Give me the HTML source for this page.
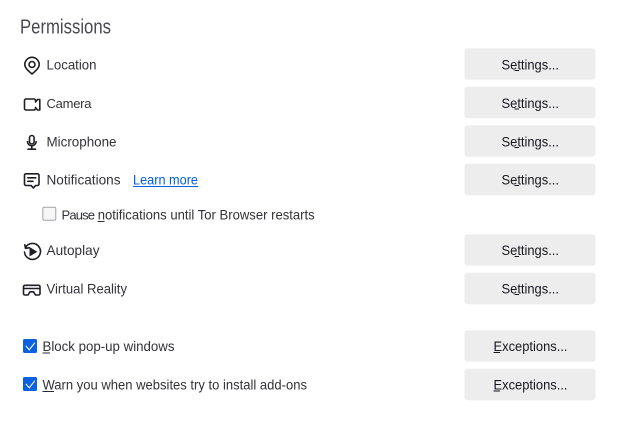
<!DOCTYPE html>
<html><head><meta charset="utf-8"><style>
html,body{margin:0;padding:0;background:#fff;width:629px;height:423px;overflow:hidden}
svg{display:block;filter:blur(.35px)}
text{font-family:"Liberation Sans",sans-serif;font-size:14px;fill:#33323a}
.b{fill:#ededee}
.ic{fill:none;stroke:#1f1e26;stroke-width:1.6;stroke-linejoin:round;stroke-linecap:round}
.u{stroke:#2b2a33;stroke-width:1}
</style></head><body>
<svg width="629" height="423" viewBox="0 0 629 423" xmlns="http://www.w3.org/2000/svg">
<text x="20" y="33.500" style="font-size:20px;fill:#4a4950" textLength="91" lengthAdjust="spacingAndGlyphs">Permissions</text>

<text x="46.500" y="69.300" textLength="50" lengthAdjust="spacingAndGlyphs">Location</text>
<text x="46.500" y="107.800" textLength="45" lengthAdjust="spacing" style="font-size:13px">Camera</text>
<text x="46.500" y="146.300" textLength="70" lengthAdjust="spacingAndGlyphs">Microphone</text>
<text x="46.500" y="184.300" textLength="74" lengthAdjust="spacingAndGlyphs">Notifications</text>
<text x="133" y="184.300" textLength="65" lengthAdjust="spacingAndGlyphs" style="fill:#0060df">Learn more</text>
<line x1="133" x2="198" y1="186.500" y2="186.500" stroke="#0060df" stroke-width="1"/>
<text x="61.500" y="219.300" textLength="33.500" lengthAdjust="spacing" style="font-size:13px">Pause</text>
<text x="97.700" y="219.300" textLength="217" lengthAdjust="spacingAndGlyphs">notifications until Tor Browser restarts</text>
<line x1="97.700" x2="104.500" y1="221.500" y2="221.500" class="u"/>
<text x="46.500" y="255" textLength="53" lengthAdjust="spacingAndGlyphs">Autoplay</text>
<text x="46.500" y="293.500" textLength="80.500" lengthAdjust="spacingAndGlyphs">Virtual Reality</text>
<text x="42.500" y="351" textLength="132" lengthAdjust="spacingAndGlyphs">Block pop-up windows</text>
<line x1="42.500" x2="50" y1="353" y2="353" class="u"/>
<text x="42.500" y="389.500" textLength="264.500" lengthAdjust="spacingAndGlyphs">Warn you when websites try to install add-ons</text>
<line x1="42.500" x2="54" y1="391.500" y2="391.500" class="u"/>

<!-- location -->
<path class="ic" d="M32 74C28.500 71 24.800 68 24.800 64.500a7.200 7.200 0 0 1 14.400 0C39.200 68 35.500 71 32 74Z"/>
<circle class="ic" cx="32" cy="64.500" r="3"/>
<!-- camera -->
<path class="ic" d="M26 99H34a1.500 1.500 0 0 1 1.500 1.500V102L37.500 99.500H39.800V110H37.500L35.500 107.500V108.500a1.500 1.500 0 0 1-1.500 1.500H26a1.500 1.500 0 0 1-1.500-1.500V100.500A1.500 1.500 0 0 1 26 99Z"/>
<!-- mic -->
<rect class="ic" x="29.500" y="135.500" width="4.600" height="8.500" rx="2.300"/>
<path class="ic" d="M27.500 141.500a4.300 4.300 0 0 0 8.600 0M31.800 146V149M28 149.200H35.500"/>
<!-- notifications -->
<path class="ic" d="M26 173.800H37.500a1.500 1.500 0 0 1 1.500 1.500V184a1.500 1.500 0 0 1-1.500 1.500H35.500L33.500 188L31 185.500H26A1.500 1.500 0 0 1 24.500 184V175.300A1.500 1.500 0 0 1 26 173.800Z"/>
<path class="ic" d="M27.800 177.800H35.800M27.800 181.300H33"/>
<!-- pause checkbox -->
<rect x="42.800" y="207.300" width="13" height="13" rx="1.500" fill="#f6f6f7" stroke="#a2a2a9"/>
<!-- autoplay -->
<path class="ic" d="M25.800 247A8 8 0 1 1 24.500 252"/>
<path class="ic" d="M24.800 244.800L25.500 248.300L29 247.800"/>
<path d="M29.500 247V256.500L37.300 251.800Z" fill="#1f1e26"/>
<!-- VR -->
<path class="ic" d="M25 285.300H38.500a1.500 1.500 0 0 1 1.500 1.500V293.500a1.500 1.500 0 0 1-1.500 1.500H35.500L33.500 291.800H30L28 295H25A1.500 1.500 0 0 1 23.500 293.500V286.800A1.500 1.500 0 0 1 25 285.300Z"/>
<path class="ic" d="M24 288.500H39.500"/>
<!-- checked -->
<rect x="23" y="339" width="14" height="14" rx="1.500" fill="#0b62e0"/>
<path d="M25.800 345.800L29.200 349.800L34.800 342.800" fill="none" stroke="#fff" stroke-width="1.100"/>
<rect x="23" y="377" width="14" height="14" rx="1.500" fill="#0b62e0"/>
<path d="M25.800 383.800L29.200 387.800L34.800 380.800" fill="none" stroke="#fff" stroke-width="1.100"/>

<!-- buttons -->
<g class="b">
<rect x="464.500" y="48.300" width="131" height="31.500" rx="3"/>
<rect x="464.500" y="86.800" width="131" height="31.500" rx="3"/>
<rect x="464.500" y="125.300" width="131" height="31.500" rx="3"/>
<rect x="464.500" y="163.800" width="131" height="31.500" rx="3"/>
<rect x="464.500" y="234.300" width="131" height="31.500" rx="3"/>
<rect x="464.500" y="272.800" width="131" height="31.500" rx="3"/>
<rect x="464.500" y="330.300" width="131" height="31.500" rx="3"/>
<rect x="464.500" y="368.800" width="131" height="31.500" rx="3"/>
</g>
<text x="501.500" y="69.300" textLength="57.500" lengthAdjust="spacingAndGlyphs" style="fill:#18171f">Settings...</text>
<text x="501.500" y="107.800" textLength="57.500" lengthAdjust="spacingAndGlyphs" style="fill:#18171f">Settings...</text>
<text x="501.500" y="146.300" textLength="57.500" lengthAdjust="spacingAndGlyphs" style="fill:#18171f">Settings...</text>
<text x="501.500" y="184.300" textLength="57.500" lengthAdjust="spacingAndGlyphs" style="fill:#18171f">Settings...</text>
<text x="501.500" y="255" textLength="57.500" lengthAdjust="spacingAndGlyphs" style="fill:#18171f">Settings...</text>
<text x="501.500" y="293.500" textLength="57.500" lengthAdjust="spacingAndGlyphs" style="fill:#18171f">Settings...</text>
<text x="493.500" y="351" textLength="74" lengthAdjust="spacingAndGlyphs" style="fill:#18171f">Exceptions...</text>
<text x="493.500" y="389.500" textLength="74" lengthAdjust="spacingAndGlyphs" style="fill:#18171f">Exceptions...</text>
<g stroke="#18171f" stroke-width="1">
<line x1="514.500" x2="519" y1="70.500" y2="70.500"/>
<line x1="514.500" x2="519" y1="109" y2="109"/>
<line x1="514.500" x2="519" y1="147.500" y2="147.500"/>
<line x1="514.500" x2="519" y1="185.500" y2="185.500"/>
<line x1="514.500" x2="519" y1="256.500" y2="256.500"/>
<line x1="514.500" x2="519" y1="294.500" y2="294.500"/>
<line x1="493.500" x2="500" y1="352.500" y2="352.500"/>
<line x1="493.500" x2="500" y1="391" y2="391"/>
</g>
</svg>
</body></html>
